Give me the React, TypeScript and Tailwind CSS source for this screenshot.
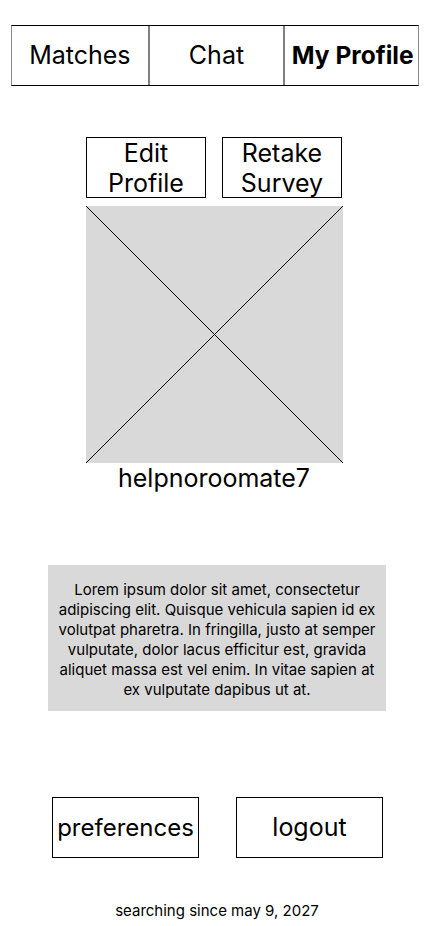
import React from "react";

const TABS = [
  { label: "Matches", active: false, w: "w-[136px]" },
  { label: "Chat", active: false, w: "w-[136px]" },
  { label: "My Profile", active: true, w: "w-[135px]" },
];

export default function App() {
  return (
    <div
      className="w-[428px] min-h-[926px] bg-white text-black flex flex-col"
      style={{ fontFamily: "Inter, 'Noto Sans', sans-serif" }}
    >
      {/* top tabs */}
      <nav className="mt-[25px] ml-[11px] flex h-[61px] w-[408px] border-y border-black border-x border-x-[#8a8a8a]">
        {TABS.map((t, i) => (
          <div
            key={t.label}
            className={`${t.w} flex items-center justify-center ${
              i > 0 ? "border-l-2 border-[#808080]" : ""
            } ${t.active ? "font-bold text-[24.5px] pl-[2px]" : "font-normal text-[25px]"}`}
          >
            {t.label}
          </div>
        ))}
      </nav>

      {/* profile */}
      <div className="mt-[51px] flex flex-col items-center">
        <div className="flex gap-4 w-[256px]">
          <button className="w-[121px] h-[61px] border border-black flex items-center justify-center text-[25px] leading-[30px]">
            Edit
            <br />
            Profile
          </button>
          <button className="w-[121px] h-[61px] border border-black flex items-center justify-center text-[25px] leading-[30px]">
            Retake
            <br />
            Survey
          </button>
        </div>
        <div className="mt-[8px] w-[257px] h-[257px] bg-[#d9d9d9]">
          <svg width="257" height="257" viewBox="0 0 257 257" className="block">
            <line x1="0" y1="0" x2="257" y2="257" stroke="#000" strokeWidth="1" />
            <line x1="257" y1="0" x2="0" y2="257" stroke="#000" strokeWidth="1" />
          </svg>
        </div>
        <div className="text-[25px] leading-[30px]">helpnoroomate7</div>
      </div>

      {/* bio */}
      <div className="mt-[72px] ml-[48px] w-[338px] h-[146px] bg-[#d9d9d9] flex items-center justify-center px-2 pt-[3px]">
        <p className="text-[15px] leading-[20px] text-center text-black">
          Lorem ipsum dolor sit amet, consectetur adipiscing elit. Quisque vehicula sapien id ex
          volutpat pharetra. In fringilla, justo at semper vulputate, dolor lacus efficitur est,
          gravida aliquet massa est vel enim. In vitae sapien at ex vulputate dapibus ut at.
        </p>
      </div>

      {/* actions */}
      <div className="mt-[86px] ml-[52px] flex gap-[37px]">
        <button className="w-[147px] h-[61px] border border-black flex items-center justify-center text-[24px]">
          preferences
        </button>
        <button className="w-[147px] h-[61px] border border-black flex items-center justify-center text-[25px]">
          logout
        </button>
      </div>

      <p className="mt-[43px] ml-[6px] text-center text-[15px] leading-[20px]">
        searching since may 9, 2027
      </p>
    </div>
  );
}
